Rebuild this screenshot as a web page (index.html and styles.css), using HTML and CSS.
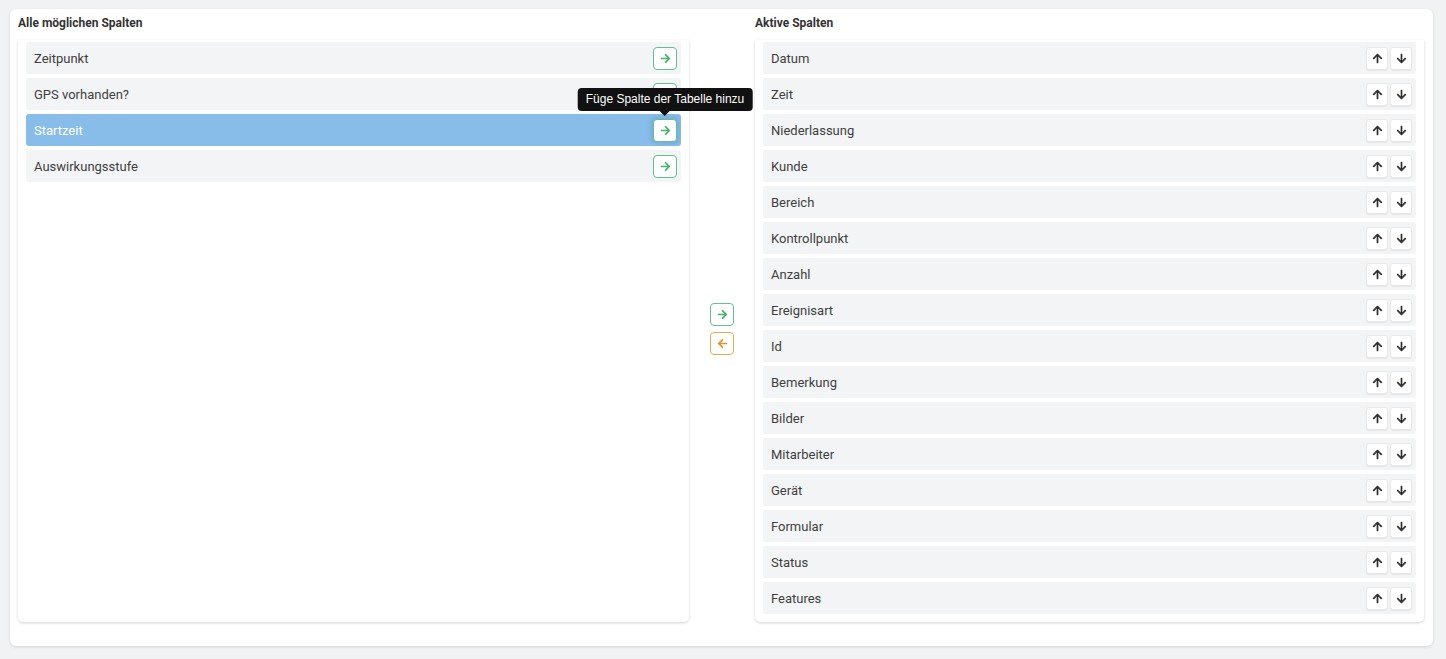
FILE: index.html
```
<!DOCTYPE html>
<html lang="de">
<head>
  <meta charset="UTF-8" />
  <title>Spalten</title>
  <link rel="stylesheet" href="styles.css">
</head>
<body>
  <svg class="icons" xmlns="http://www.w3.org/2000/svg">
    <symbol id="i-right" viewBox="0 0 448 512"><path d="M190.5 66.9l22.2-22.2c9.4-9.4 24.6-9.4 33.9 0L441 239c9.4 9.4 9.4 24.6 0 33.9L246.6 467.3c-9.4 9.4-24.6 9.4-33.9 0l-22.2-22.2c-9.5-9.5-9.3-25 .4-34.3L311.4 296H24c-13.3 0-24-10.7-24-24v-32c0-13.3 10.7-24 24-24h287.4L190.9 101.2c-9.8-9.3-10-24.8-.4-34.3z"/></symbol>
    <symbol id="i-left" viewBox="0 0 448 512"><path d="M257.5 445.1l-22.2 22.2c-9.4 9.4-24.6 9.4-33.9 0L7 273c-9.4-9.4-9.4-24.6 0-33.9L201.4 44.7c9.4-9.4 24.6-9.4 33.9 0l22.2 22.2c9.5 9.5 9.3 25-.4 34.3L136.6 216H424c13.3 0 24 10.7 24 24v32c0 13.3-10.7 24-24 24H136.6l120.5 114.8c9.8 9.3 10 24.8.4 34.3z"/></symbol>
    <symbol id="i-up" viewBox="0 0 448 512"><path d="M34.9 289.5l-22.2-22.2c-9.4-9.4-9.4-24.6 0-33.9L207 39c9.4-9.4 24.6-9.4 33.9 0l194.3 194.3c9.4 9.4 9.4 24.6 0 33.9L413 289.4c-9.5 9.5-25 9.3-34.3-.4L264 168.6V456c0 13.3-10.7 24-24 24h-32c-13.3 0-24-10.7-24-24V168.6L69.2 289.1c-9.3 9.8-24.8 10-34.3.4z"/></symbol>
    <symbol id="i-down" viewBox="0 0 448 512"><path d="M413.1 222.5l22.2 22.2c9.4 9.4 9.4 24.6 0 33.9L241 473c-9.4 9.4-24.6 9.4-33.9 0L12.7 278.6c-9.4-9.4-9.4-24.6 0-33.9l22.2-22.2c9.5-9.5 25-9.3 34.3.4L184 343.4V56c0-13.3 10.7-24 24-24h32c13.3 0 24 10.7 24 24v287.4l114.8-120.5c9.3-9.8 24.8-10 34.3-.4z"/></symbol>
  </svg>

  <div class="card">
    <div class="columns">
      <section class="column">
        <h3>Alle möglichen Spalten</h3>
        <div class="panel">
          <div class="row">Zeitpunkt<button class="btn add"><svg><use href="#i-right"/></svg></button></div>
          <div class="row">GPS vorhanden?<button class="btn add"><svg><use href="#i-right"/></svg></button></div>
          <div class="row selected">Startzeit<button class="btn add hover"><svg><use href="#i-right"/></svg><span class="tooltip">Füge Spalte der Tabelle hinzu</span></button></div>
          <div class="row">Auswirkungsstufe<button class="btn add"><svg><use href="#i-right"/></svg></button></div>
        </div>
      </section>

      <div class="middle">
        <button class="btn add"><svg><use href="#i-right"/></svg></button>
        <button class="btn remove"><svg><use href="#i-left"/></svg></button>
      </div>

      <section class="column">
        <h3>Aktive Spalten</h3>
        <div class="panel" id="active"></div>
      </section>
    </div>
  </div>

  <script>
    const active = ['Datum', 'Zeit', 'Niederlassung', 'Kunde', 'Bereich', 'Kontrollpunkt', 'Anzahl',
      'Ereignisart', 'Id', 'Bemerkung', 'Bilder', 'Mitarbeiter', 'Gerät', 'Formular', 'Status', 'Features'];
    const panel = document.getElementById('active');

    active.forEach((name) => {
      const row = document.createElement('div');
      row.className = 'row';
      row.innerHTML = `<span>${name}</span>
        <div class="sort">
          <button class="btn move"><svg><use href="#i-up"/></svg></button>
          <button class="btn move"><svg><use href="#i-down"/></svg></button>
        </div>`;
      panel.appendChild(row);
    });
  </script>
</body>
</html>
```

FILE: styles.css
```
* {
  box-sizing: border-box;
}
body {
  margin: 0;
  background: #f1f2f4;
  font-family: Roboto, "Liberation Sans", sans-serif;
  color: #3f3f3f;
}
.icons {
  display: none;
}

.card {
  margin: 9px 13px 13px 10px;
  padding: 7px 9px 24px 8px;
  background: #fff;
  border-radius: 6px;
  box-shadow: 0 1px 3px rgba(0,0,0,0.12);
}
.columns {
  display: grid;
  grid-template-columns: 671px 66px 1fr;
}
.column h3 {
  margin: 0 0 9px;
  font-size: 12px;
  line-height: 15px;
  font-weight: 700;
  color: #333;
}
.panel {
  height: 582px;
  padding: 2px 8px 8px;
  background: #fff;
  border-radius: 0 0 5px 5px;
  box-shadow: 0 1px 3px rgba(0,0,0,0.18);
}

.row {
  display: flex;
  align-items: center;
  justify-content: space-between;
  height: 32px;
  margin-bottom: 4px;
  padding: 0 4px 0 8px;
  background: #f3f4f5;
  border-radius: 3px;
  font-size: 13px;
}
.row.selected {
  background: #89bde9;
  color: #fff;
}

.btn {
  position: relative;
  display: flex;
  align-items: center;
  justify-content: center;
  padding: 0;
  background: #fff;
  border: 1px solid #dedede;
  border-radius: 4px;
  cursor: pointer;
}
.btn svg {
  width: 11px;
  height: 11px;
}
.btn.add {
  width: 24px;
  height: 23px;
  border-color: #62c18c;
  fill: #43b36b;
}
.btn.remove {
  width: 24px;
  height: 23px;
  border-color: #e3ad4f;
  fill: #e0962c;
}
.btn.hover {
  box-shadow: 0 0 4px 2px rgba(60,110,160,0.25);
}
.btn.move {
  width: 22px;
  height: 23px;
  border-color: #e8e8e8;
  border-radius: 3px;
  box-shadow: 0 1px 1px rgba(0,0,0,0.06);
  fill: #2f2f2f;
}

.sort {
  display: flex;
  gap: 2px;
}

.middle {
  display: flex;
  flex-direction: column;
  align-items: center;
  justify-content: center;
  gap: 6px;
  padding-top: 20px;
}

.tooltip {
  position: absolute;
  bottom: calc(100% + 9px);
  left: 50%;
  transform: translateX(-50%);
  padding: 0 8px;
  height: 23px;
  line-height: 23px;
  white-space: nowrap;
  background: #111;
  color: #fff;
  border-radius: 4px;
  font-size: 12px;
  font-weight: 500;
}
.tooltip::after {
  content: "";
  position: absolute;
  top: 100%;
  left: 50%;
  margin-left: -5px;
  border: 5px solid transparent;
  border-top-color: #111;
}
```
